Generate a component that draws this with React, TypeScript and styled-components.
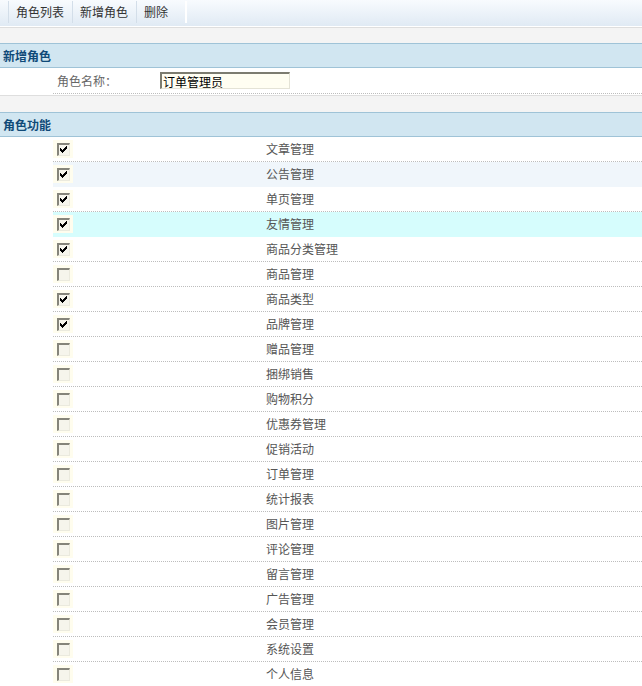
import styled, { createGlobalStyle } from "styled-components";

const GlobalStyle = createGlobalStyle`
    html, body {
        margin: 0;
        padding: 0;
        background: #fff;
    }
    body {
        font-family: "Noto Sans CJK SC", "Noto Sans", sans-serif;
        font-size: 12px;
        color: #555;
    }
`;

const Toolbar = styled.div`
    height: 26px;
    display: flex;
    align-items: flex-start;
    padding-left: 8px;
    background: linear-gradient(to bottom, #f8fbfe 0%, #e0eaf4 100%);
    border-bottom: 1px solid #fff;
`;

const ToolItem = styled.a<{ $wide?: boolean }>`
    display: flex;
    align-items: center;
    height: 22px;
    margin-top: 1px;
    padding: 0 ${p => (p.$wide ? "17px" : "8px")} 0 7px;
    border-left: 1px solid #d3dee9;
    color: #333;
    text-decoration: none;
    line-height: 22px;
    cursor: pointer;
    &:last-child {
        border-right: 2px solid #fff;
    }
`;

const Spacer = styled.div<{ $h: number }>`
    height: ${p => p.$h}px;
    background: #f4f4f4;
    border-top: 1px solid #dedede;
    border-bottom: 1px solid #9fc3d7;
`;

const SectionHeader = styled.div`
    height: 23px;
    line-height: 23px;
    padding-left: 3px;
    background: #d1e6f1;
    border-bottom: 1px solid #9fc3d7;
    color: #0f4a78;
    font-weight: bold;
`;

const FormRow = styled.div`
    margin-left: 53px;
    height: 25px;
    display: flex;
    align-items: center;
    border-bottom: 1px dotted #bdbdbd;
`;

const FormLabel = styled.label`
    width: 103px;
    padding-left: 4px;
    color: #666;
`;

const TextInput = styled.input`
    box-sizing: border-box;
    width: 130px;
    height: 17px;
    margin: 0;
    padding: 0 0 0 1px;
    font-family: inherit;
    font-size: 12px;
    line-height: 15px;
    color: #000;
    background: #fffef2;
    border-style: solid;
    border-width: 2px 1px 1px 2px;
    border-color: #7c7c70 #e4e3d6 #e4e3d6 #7c7c70;
    outline: none;
`;

const Gap = styled.div`
    height: 1px;
`;

const PermList = styled.div`
    margin-left: 53px;
`;

const PermRow = styled.div<{ $bg?: string }>`
    height: 24px;
    display: grid;
    grid-template-columns: 20px 1fr;
    align-items: center;
    background: ${p => p.$bg || "#fff"};
    border-bottom: 1px ${p => (p.$bg ? "solid" : "dotted")} ${p => p.$bg || "#bdbdbd"};
`;

const CheckCell = styled.span`
    display: flex;
    align-items: center;
    justify-content: center;
    width: 20px;
    height: 18px;
    background: #fffdee;
`;

const Check = styled.span`
    box-sizing: border-box;
    width: 13px;
    height: 13px;
    display: flex;
    align-items: center;
    justify-content: center;
    background: #f6f5ec;
    border-style: solid;
    border-width: 2px 1px 1px 2px;
    border-color: #85847a #ebeade #ebeade #85847a;
`;

const PermName = styled.span`
    padding-left: 193px;
    color: #555;
    line-height: 24px;
`;

const perms: [string, boolean][] = [
    ["文章管理", true],
    ["公告管理", true],
    ["单页管理", true],
    ["友情管理", true],
    ["商品分类管理", true],
    ["商品管理", false],
    ["商品类型", true],
    ["品牌管理", true],
    ["赠品管理", false],
    ["捆绑销售", false],
    ["购物积分", false],
    ["优惠券管理", false],
    ["促销活动", false],
    ["订单管理", false],
    ["统计报表", false],
    ["图片管理", false],
    ["评论管理", false],
    ["留言管理", false],
    ["广告管理", false],
    ["会员管理", false],
    ["系统设置", false],
    ["个人信息", false],
];

const rowBg: Record<number, string> = {
    1: "#f0f6fb",
    3: "#d6fdfd",
};

function App() {
    return (
        <>
            <GlobalStyle />
            <Toolbar>
                <ToolItem>角色列表</ToolItem>
                <ToolItem>新增角色</ToolItem>
                <ToolItem $wide>删除</ToolItem>
            </Toolbar>
            <Spacer $h={15} />
            <SectionHeader>新增角色</SectionHeader>
            <FormRow>
                <FormLabel>角色名称：</FormLabel>
                <TextInput defaultValue="订单管理员" />
            </FormRow>
            <Gap />
            <Spacer $h={16} />
            <SectionHeader>角色功能</SectionHeader>
            <PermList>
                {perms.map(([name, checked], i) => (
                    <PermRow key={name} $bg={rowBg[i]}>
                        <CheckCell>
                            <Check>
                                {checked && (
                                    <svg width="7" height="7" viewBox="0 0 7 7" shapeRendering="crispEdges">
                                        <path
                                            d="M0 2h1v3h-1z M1 3h1v3h-1z M2 4h1v3h-1z M3 3h1v3h-1z M4 2h1v3h-1z M5 1h1v3h-1z M6 0h1v3h-1z"
                                            fill="#000"
                                        />
                                    </svg>
                                )}
                            </Check>
                        </CheckCell>
                        <PermName>{name}</PermName>
                    </PermRow>
                ))}
            </PermList>
        </>
    );
}

export default App;
